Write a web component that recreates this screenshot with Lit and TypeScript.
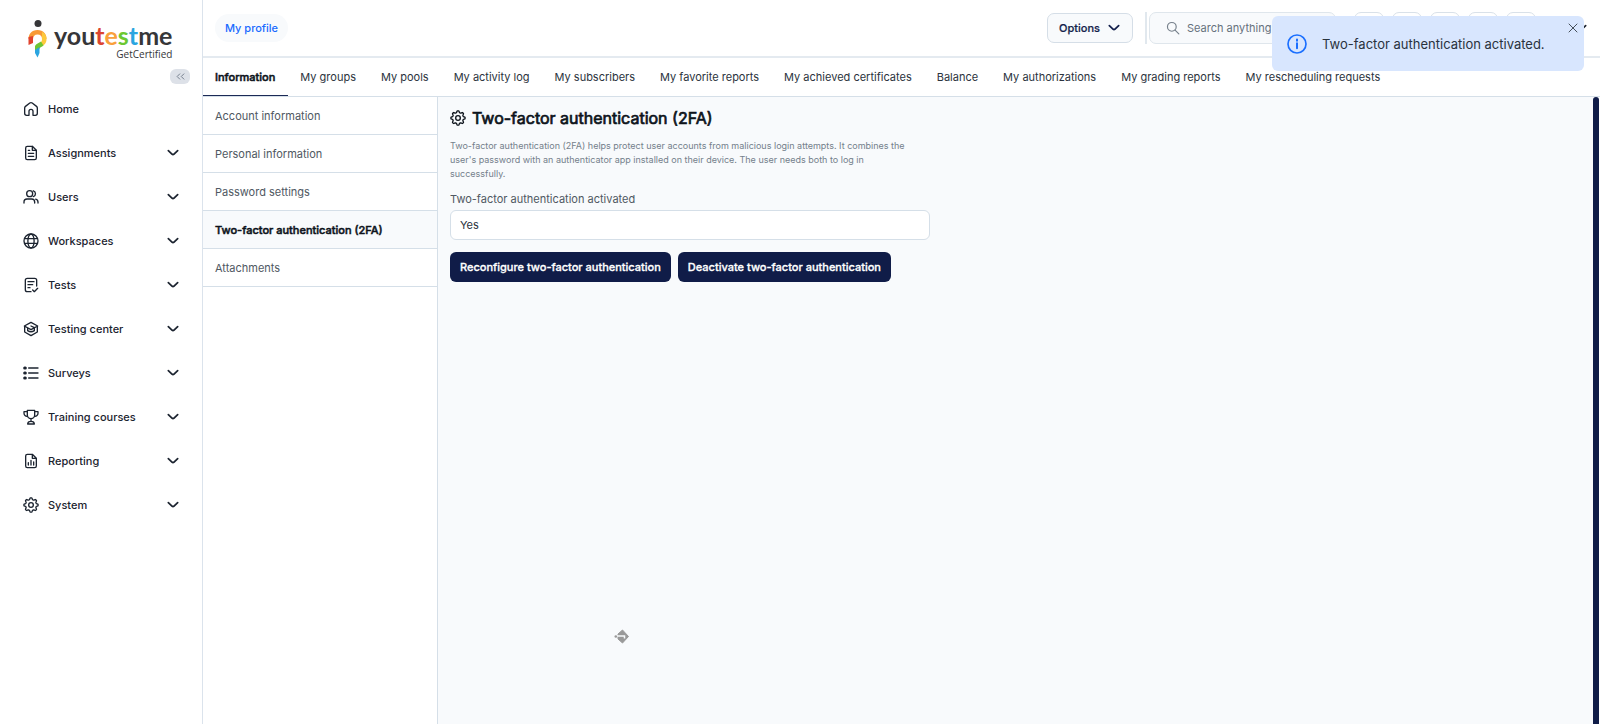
import { LitElement, html, css, svg } from "lit";
import { customElement, property, state } from "lit/decorators.js";
import { classMap } from "lit/directives/class-map.js";

/** Outline of a cog with eight soft teeth, centred in a 24-unit box. */
function cogOutline(): string {
  const points: string[] = [];
  for (let i = 0; i < 96; i++) {
    const angle = (i / 96) * Math.PI * 2;
    const radius = 9.4 + 1.3 * Math.tanh(2 * Math.cos(angle * 8));
    points.push(`${(12 + radius * Math.sin(angle)).toFixed(2)} ${(12 - radius * Math.cos(angle)).toFixed(2)}`);
  }
  return `M${points.join("L")}Z`;
}

const ICONS = {
  home: svg`<path d="M9 21.5H5.5A3 3 0 0 1 2.5 18.500V10.500a3 3 0 0 1 1.200-2.400l6.500-5a3 3 0 0 1 3.600 0l6.500 5a3 3 0 0 1 1.200 2.400V18.500a3 3 0 0 1-3 3H15V15.500a3 3 0 0 0-6 0V21.500"/>`,
  document: svg`<path d="M14 2H6.500A2.500 2.500 0 0 0 4 4.500v15A2.500 2.500 0 0 0 6.500 22h11a2.500 2.500 0 0 0 2.500-2.500V8Z"/><path d="M14 2v6h6M8 12.500h8M8 17h8M8 8h2"/>`,
  users: svg`<circle cx="10" cy="7" r="4.500"/><path d="M1.500 21v-1.500a4.500 4.500 0 0 1 4.500-4.500h7a4.500 4.500 0 0 1 4.500 4.500V21M15.500 2.700a4.500 4.500 0 0 1 0 8.600M19 15.200a4.500 4.500 0 0 1 3.500 4.300V21"/>`,
  globe: svg`<circle cx="12" cy="12" r="10.500"/><ellipse cx="12" cy="12" rx="4.700" ry="10.500"/><path d="M2.500 8.500h19M2.500 15.500h19"/>`,
  test: svg`<path d="M20.500 13.500V5A3 3 0 0 0 17.500 2h-11a3 3 0 0 0-3 3v14a3 3 0 0 0 3 3H12M7.500 7h9M7.500 11.500h7M7.500 16h3M14.500 19.500l2.500 2.500 5-5"/>`,
  cap: svg`<path d="M12 2L2 7.500 12 13 22 7.500ZM2.500 8v8.500L12 22l9.500-5.500V8M12 7.500l5 2.500v4.500c-3 2-7 2-10 0V11"/>`,
  list: svg`<path d="M8.500 4.500H22.500M8.500 12H22.500M8.500 19.500H22.500"/><path d="M2.500 4.500h1M2.500 12h1M2.500 19.500h1" stroke-width="4.500"/>`,
  trophy: svg`<path d="M6.500 2h11v7a5.500 5.500 0 0 1-11 0ZM6.500 4H1.500v2.500A4.500 4.500 0 0 0 6.500 11M17.500 4h5v2.500A4.500 4.500 0 0 1 17.500 11M12 14.500v4M7 22.500c0-3 2-4 5-4s5 1 5 4Z"/>`,
  report: svg`<path d="M14 2H6.500A2.500 2.500 0 0 0 4 4.500v15A2.500 2.500 0 0 0 6.500 22h11a2.500 2.500 0 0 0 2.500-2.500V8ZM14 2v6h6M8 18v-3.500M12 18v-7M16 18v-4.500"/>`,
  cog: svg`<path d=${cogOutline()}/><circle cx="12" cy="12" r="3.500"/>`,
  chevron: svg`<path d="M4 8l6.200 5.800q1.800 1.600 3.600 0L20 8" stroke-width="3"/>`,
  search: svg`<circle cx="10" cy="10" r="7.500"/><path d="M15.500 15.500L22 22"/>`,
  close: svg`<path d="M4 4l16 16M20 4L4 20"/>`,
  info: svg`<circle cx="12" cy="12" r="10.800"/><path d="M12 11v6M12 6.500v1.500" stroke-width="2.400"/>`,
  collapse: svg`<path d="M10 5l-7 7 7 7M21 5l-7 7 7 7" stroke-width="2.500"/>`,
};
type IconName = keyof typeof ICONS;

@customElement("ui-icon")
class UiIcon extends LitElement {
  static styles = css`
    :host { display: inline-flex; flex: none; width: 16px; height: 16px; }
    svg {
      width: 100%; height: 100%; fill: none; stroke: currentColor;
      stroke-width: 2; stroke-linecap: round; stroke-linejoin: round;
    }
  `;
  @property() name: IconName = "home";
  render() {
    return html`<svg viewBox="0 0 24 24" aria-hidden="true">${ICONS[this.name]}</svg>`;
  }
}

@customElement("app-sidebar")
class AppSidebar extends LitElement {
  static styles = css`
    :host {
      display: flex; flex-direction: column; box-sizing: border-box; flex: none; width: 203px;
      background: #fff; border-right: 1px solid #dbe3ec; color: #1c2430;
    }
    .logo { display: flex; align-items: flex-start; gap: 7px; padding: 20px 0 0 28px; color: #363638; }
    .mark { width: 19px; height: 38px; flex: none; }
    .brand { display: flex; flex-direction: column; align-items: flex-end; }
    .word { font: 700 25px/30px Lato, sans-serif; }
    .red { color: #db4530; }
    .orange { color: #f9a03c; }
    .green { color: #6cc832; }
    .blue { color: #2ba5e0; }
    .tag { font: 400 10px/8px "Open Sans", sans-serif; }
    .tools { display: flex; justify-content: flex-end; padding: 11px 12px 3px 0; }
    .collapse {
      display: flex; align-items: center; justify-content: center; width: 20px; height: 15px;
      padding: 0; border: 0; border-radius: 6px; background: #dde1e8; color: #6f7a89;
    }
    .collapse ui-icon { width: 9px; height: 9px; }
    ul { list-style: none; margin: 0; padding: 0; }
    .item {
      display: flex; align-items: center; gap: 9px; box-sizing: border-box; width: 100%; height: 44px;
      padding: 0 22px 0 23px; border: 0; background: none; color: inherit;
      font: 500 11px/16px Inter, sans-serif; text-decoration: none; text-align: left;
    }
    .label { flex: 1; }
    .chevron { width: 14px; height: 14px; }
  `;
  private items: [IconName, string][] = [
    ["home", "Home"],
    ["document", "Assignments"],
    ["users", "Users"],
    ["globe", "Workspaces"],
    ["test", "Tests"],
    ["cap", "Testing center"],
    ["list", "Surveys"],
    ["trophy", "Training courses"],
    ["report", "Reporting"],
    ["cog", "System"],
  ];
  render() {
    return html`
      <div class="logo">
        <svg class="mark" viewBox="0 0 19 38" aria-hidden="true">
          <circle cx="10" cy="3.500" r="3.500" fill="#363638" />
          <path d="M.5 19C.5 14 3.500 10 9.500 10s9 4 9 9h-4.500c0-3-1.500-4.500-4.500-4.500S5.500 16 5 19z" fill="#f89a35" />
          <path d="M.5 17l4.500-1v7l-4.500 2z" fill="#e1432e" />
          <path d="M14 12c3 1.200 4.500 3.500 4.500 7 0 4-2 6-5 7.500l-2-3.500c2-1 2.500-2 2.500-4z" fill="#fdc93d" />
          <path d="M7 26c1-2.500 4-3 6-4.500l2.500 4c-2 1.500-4 2-4.500 4l-4 1.500z" fill="#6fc534" />
          <path d="M7 30l4.500-3v6L9.500 37.500 7 33z" fill="#2ba5e0" />
        </svg>
        <div class="brand">
          <span class="word">you<span class="red">t</span><span class="orange">e</span><span class="green">s</span><span class="blue">t</span>me</span>
          <span class="tag">GetCertified</span>
        </div>
      </div>
      <div class="tools">
        <button class="collapse" aria-label="Collapse menu"><ui-icon name="collapse"></ui-icon></button>
      </div>
      <nav aria-label="Main">
        <ul>
          ${this.items.map(([icon, label], i) => html`<li>
            ${i === 0
              ? html`<a class="item" href="#home"><ui-icon name=${icon}></ui-icon><span class="label">${label}</span></a>`
              : html`<button class="item" aria-expanded="false">
                  <ui-icon name=${icon}></ui-icon><span class="label">${label}</span>
                  <ui-icon class="chevron" name="chevron"></ui-icon>
                </button>`}
          </li>`)}
        </ul>
      </nav>
    `;
  }
}

@customElement("app-header")
class AppHeader extends LitElement {
  static styles = css`
    :host {
      display: flex; align-items: center; box-sizing: border-box; height: 58px;
      padding: 0 12px; border-bottom: 2px solid #e4eaf0;
      font: 500 11px/16px Inter, sans-serif;
    }
    .crumb {
      padding: 6px 10px; border-radius: 14px; background: #f8fafc; color: #1a6bff; text-decoration: none;
    }
    .tools { display: flex; align-items: center; margin-left: auto; }
    .options {
      display: flex; align-items: center; gap: 7px; box-sizing: border-box; height: 30px; padding: 0 11px;
      border: 1px solid #d5dee7; border-radius: 7px; background: #f8fafc; color: #131f4b; font: inherit;
      -webkit-text-stroke: 0.2px currentColor;
    }
    .options ui-icon { width: 14px; height: 14px; }
    .divider { width: 2px; height: 32px; margin: 0 2px 0 12px; background: #e1e8ee; }
    .search {
      display: flex; align-items: center; gap: 7px; box-sizing: border-box; width: 187px; height: 32px;
      padding: 0 8px 0 16px; border: 1px solid #dfe6ec; border-radius: 7px; background: #f8fafc; color: #76808b;
    }
    .search ui-icon { width: 14px; height: 14px; }
    .search input {
      flex: 1; min-width: 0; padding: 0; border: 0; outline: 0; background: none;
      font: 400 11px/16px Inter, sans-serif; color: #47515c;
    }
    .search input::placeholder { color: #66717c; opacity: 1; }
    .shortcuts { display: flex; gap: 8px; margin-left: 18px; }
    .shortcut { width: 30px; height: 32px; padding: 0; border: 1px solid #d9e1e9; border-radius: 7px; background: #fff; }
    .account {
      display: flex; justify-content: flex-end; width: 52px; height: 32px; align-items: center;
      padding: 0; border: 0; background: none; color: #1c2430;
    }
    .account ui-icon { width: 14px; height: 14px; }
  `;
  render() {
    return html`
      <a class="crumb" href="#profile">My profile</a>
      <div class="tools">
        <button class="options">Options<ui-icon name="chevron"></ui-icon></button>
        <span class="divider"></span>
        <label class="search">
          <ui-icon name="search"></ui-icon>
          <input type="search" placeholder="Search anything" aria-label="Search anything" />
        </label>
        <div class="shortcuts">
          ${["Calendar", "Messages", "Notifications", "Help", "Language"].map(
            (name) => html`<button class="shortcut" aria-label=${name}></button>`
          )}
        </div>
        <button class="account" aria-label="Account"><ui-icon name="chevron"></ui-icon></button>
      </div>
    `;
  }
}

@customElement("app-root")
class AppRoot extends LitElement {
  static styles = css`
    :host {
      display: flex; min-height: 100vh; background: #fff; color: #1c2430;
      font: 400 11px/16px Inter, sans-serif;
    }
    .main { display: flex; flex-direction: column; flex: 1; min-width: 0; }
    .tabs { display: flex; height: 38px; border-bottom: 1px solid #d5dfe8; }
    .tab {
      display: flex; align-items: center; padding: 0 13px 0 12px; color: #2b333d; text-decoration: none;
      white-space: nowrap; border-bottom: 1px solid transparent;
    }
    .tab.active { color: #0d131b; font-weight: 500; -webkit-text-stroke: 0.5px currentColor; border-bottom-color: #1c2a56; }
    .body { display: flex; flex: 1; }
    .sections { box-sizing: border-box; width: 235px; flex: none; border-right: 1px solid #d5dfe8; }
    .section {
      display: flex; align-items: center; box-sizing: border-box; height: 38px; padding: 0 12px;
      border-bottom: 1px solid #d5dfe8; color: #4f5862; text-decoration: none;
    }
    .section.active { background: #f8fafc; color: #0d131b; font-weight: 500; -webkit-text-stroke: 0.5px currentColor; }
    .panel { flex: 1; padding: 11px 12px; background: #f8fafc; }
    .title { display: flex; align-items: center; gap: 6px; color: #0d131b; }
    h1 { margin: 0; font: 400 16px/20px Inter, sans-serif; -webkit-text-stroke: 0.7px currentColor; }
    .content { max-width: 480px; }
    .hint { margin: 11px 0 0; padding-right: 16px; font-size: 9px; line-height: 14px; color: #74808b; }
    .field { display: block; margin-top: 10px; color: #4f5862; }
    .value {
      display: block; box-sizing: border-box; width: 100%; height: 30px; margin-top: 3px; padding: 0 9px;
      border: 1px solid #d5dfe8; border-radius: 6px; background: #fff; color: #2b333d; font: inherit;
    }
    .actions { display: flex; gap: 7px; margin-top: 12px; }
    .action {
      height: 30px; padding: 0 10px; border: 0; border-radius: 6px; background: #101c48; color: #fff;
      font: 500 11px/16px Inter, sans-serif; -webkit-text-stroke: 0.3px currentColor; white-space: nowrap;
    }
    .scroll { width: 7px; flex: none; background: #fff; }
    .thumb { width: 6px; height: 100%; border-radius: 3px 3px 0 0; background: #101c48; }
    .toast {
      position: fixed; top: 16px; right: 16px; display: flex; align-items: center; gap: 15px;
      box-sizing: border-box; width: 312px; height: 55px; padding: 0 15px;
      border-radius: 6px; background: #d8e6fe; color: #29323d; font-size: 13px;
    }
    .toast .info { width: 20px; height: 20px; color: #1a6fff; }
    .dismiss {
      position: absolute; top: 6px; right: 5px; display: flex; padding: 0; border: 0;
      background: none; color: #454f5a;
    }
    .dismiss ui-icon { width: 12px; height: 12px; }
    .pointer { position: fixed; left: 614px; top: 629px; width: 16px; height: 15px; }
  `;
  @state() private notice = true;
  @state() private section = 3;
  private tabs = [
    "Information", "My groups", "My pools", "My activity log", "My subscribers", "My favorite reports",
    "My achieved certificates", "Balance", "My authorizations", "My grading reports", "My rescheduling requests",
  ];
  private sections = [
    "Account information", "Personal information", "Password settings",
    "Two-factor authentication (2FA)", "Attachments",
  ];
  render() {
    return html`
      <app-sidebar></app-sidebar>
      <div class="main">
        <app-header></app-header>
        <nav class="tabs" aria-label="Profile">
          ${this.tabs.map((t, i) => html`<a class=${classMap({ tab: true, active: i === 0 })} href="#tab">${t}</a>`)}
        </nav>
        <div class="body">
          <nav class="sections" aria-label="Information">
            ${this.sections.map((s, i) => html`<a
              class=${classMap({ section: true, active: i === this.section })}
              href="#section" @click=${() => (this.section = i)}>${s}</a>`)}
          </nav>
          <main class="panel">
            <div class="title"><ui-icon name="cog"></ui-icon><h1>Two-factor authentication (2FA)</h1></div>
            <div class="content">
              <p class="hint">Two-factor authentication (2FA) helps protect user accounts from malicious login attempts. It combines the user's password with an authenticator app installed on their device. The user needs both to log in successfully.</p>
              <label class="field">Two-factor authentication activated
                <input class="value" type="text" readonly .value=${"Yes"} />
              </label>
              <div class="actions">
                <button class="action">Reconfigure two-factor authentication</button>
                <button class="action">Deactivate two-factor authentication</button>
              </div>
            </div>
          </main>
          <div class="scroll"><div class="thumb"></div></div>
        </div>
      </div>
      <svg class="pointer" viewBox="0 0 16 15" aria-hidden="true">
        <path d="M4 5L8.500 1l6 6.500L8.500 14 4 10z" fill="#999" stroke="#999" stroke-linejoin="round" />
        <path d="M3 7H10.500V9.500" stroke="#f8fafc" stroke-width="1.500" fill="none" />
        <circle cx="1.800" cy="7.500" r="1.300" fill="#999" />
      </svg>
      ${this.notice
        ? html`<div class="toast" role="status">
            <ui-icon class="info" name="info"></ui-icon>
            <span>Two-factor authentication activated.</span>
            <button class="dismiss" aria-label="Close" @click=${() => (this.notice = false)}>
              <ui-icon name="close"></ui-icon>
            </button>
          </div>`
        : null}
    `;
  }
}
